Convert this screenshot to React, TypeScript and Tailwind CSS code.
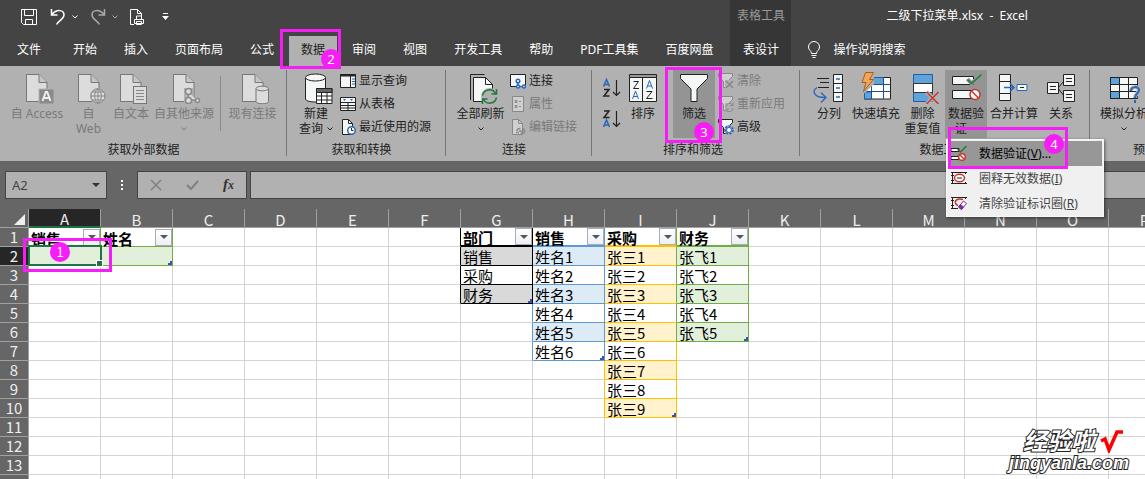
import type { ReactNode } from 'react';
import clsx from 'clsx';

const COLUMNS = 'ABCDEFGHIJKLMNOPQRSTUVWXYZ'.split('');
const ROWS = Array.from({ length: 40 }, (_, i) => i + 1);

type SheetTable = {
  items: string[];
  band: string;
  line: string;
  head: string;
};

const TABLES: Record<string, SheetTable> = {
  A: { items: ['销售', ''], band: 'bg-[#e2efda]', line: 'border-b-[#70ad47]', head: 'border-b-[#70ad47]' },
  B: { items: ['姓名', ''], band: 'bg-[#e2efda]', line: 'border-b-[#70ad47]', head: 'border-b-[#70ad47]' },
  G: {
    items: ['部门', '销售', '采购', '财务'],
    band: 'bg-[#d9d9d9]',
    line: 'border-b-black',
    head: 'border-b-2 border-b-black',
  },
  H: {
    items: ['销售', '姓名1', '姓名2', '姓名3', '姓名4', '姓名5', '姓名6'],
    band: 'bg-[#ddebf7]',
    line: 'border-b-[#5b9bd5]',
    head: 'border-b-2 border-b-[#5b9bd5]',
  },
  I: {
    items: ['采购', '张三1', '张三2', '张三3', '张三4', '张三5', '张三6', '张三7', '张三8', '张三9'],
    band: 'bg-[#fff2cc]',
    line: 'border-b-[#ffc000]',
    head: 'border-b-2 border-b-[#ffc000]',
  },
  J: {
    items: ['财务', '张飞1', '张飞2', '张飞3', '张飞4', '张飞5'],
    band: 'bg-[#e2efda]',
    line: 'border-b-[#70ad47]',
    head: 'border-b-2 border-b-[#70ad47]',
  },
};

// vertical lines between neighbouring tables
function rightEdge(col: string, row: number) {
  if ((col === 'A' || col === 'B') && row <= 2) return 'border-r-[#70ad47]';
  if (col === 'F' && row <= 4) return 'border-r-black';
  if (col === 'G' && row <= 4) return 'border-r-black';
  if (col === 'G' && row <= 7) return 'border-r-[#5b9bd5]';
  if (col === 'H' && row <= 7) return 'border-r-[#5b9bd5]';
  if (col === 'H' && row <= 10) return 'border-r-[#ffc000]';
  if (col === 'I' && row <= 6) return 'border-r-[#70ad47]';
  if (col === 'I' && row <= 10) return 'border-r-[#ffc000]';
  if (col === 'J' && row <= 6) return 'border-r-[#70ad47]';
  return 'border-r-[#d4d4d4]';
}

/* ---------- icons ---------- */

function Big({ children }: { children: ReactNode }) {
  return (
    <svg viewBox="0 0 34 32" className="h-8 w-[34px] shrink-0" fill="none" stroke="#222" strokeWidth="1">
      {children}
    </svg>
  );
}

function Small({ children }: { children: ReactNode }) {
  return (
    <svg viewBox="0 0 16 16" className="size-4 shrink-0" fill="none" stroke="#222" strokeWidth="1">
      {children}
    </svg>
  );
}

const Doc = () => (
  <g stroke="#777" fill="#dcdcdc">
    <path d="M6.500 2.500h12.500l8 8v19h-20.500z" />
    <path d="M19 2.500v8h8" fill="#c6c6c6" />
  </g>
);

const AccessIcon = () => (
  <Big>
    <Doc />
    <rect x="19" y="17" width="15" height="15" fill="#8a8a8a" stroke="#b1b1b1" />
    <path d="M22.500 29l3.300-9h1.400l3.300 9M23.800 26h5.400" stroke="#eee" strokeWidth="2" />
  </Big>
);
const WebIcon = () => (
  <Big>
    <Doc />
    <circle cx="26" cy="24" r="8" fill="#b1b1b1" stroke="none" />
    <circle cx="26" cy="24" r="7" fill="#dcdcdc" stroke="#888" />
    <ellipse cx="26" cy="24" rx="3.300" ry="7" stroke="#888" />
    <path d="M26 17v14M19 24h14M20.500 20h11M20.500 28h11" stroke="#888" />
  </Big>
);
const TextIcon = () => (
  <Big>
    <Doc />
    <rect x="19.500" y="14.500" width="13" height="17" fill="#dcdcdc" stroke="#777" />
    <path d="M22 18.500h8M22 21.500h8M22 24.500h8M22 27.500h8" stroke="#888" />
  </Big>
);
const OtherIcon = () => (
  <Big>
    <Doc />
    <path d="M17 16h9v10h8v6h-17z" fill="#b1b1b1" stroke="none" />
    <g stroke="#8a8a8a" strokeWidth="1.500" fill="#dcdcdc">
      <path d="M21.500 20v8h8" />
      <circle cx="21.500" cy="19.500" r="3" />
      <circle cx="21.500" cy="28.500" r="3" />
      <circle cx="30.500" cy="28.500" r="2" />
    </g>
  </Big>
);
const ExistingIcon = () => (
  <Big>
    <Doc />
    <path d="M20 16.500v13c0 3 12.500 3 12.500 0v-13" fill="#dcdcdc" stroke="#777" />
    <ellipse cx="26.250" cy="16.500" rx="6.250" ry="2.300" fill="#dcdcdc" stroke="#777" />
  </Big>
);
const NewQueryIcon = () => (
  <Big>
    <path d="M6.500 6v21c0 4 20 4 20 0v-21" fill="#f4f7f6" />
    <ellipse cx="16.500" cy="5.500" rx="10" ry="3.500" fill="#f4f7f6" />
    <path d="M17.500 16.500h15.500v15h-15.500z" fill="#fff" />
    <path d="M17.500 16.500h15.500v4h-15.500z" fill="#666" />
    <path d="M17.500 24h15.500M17.500 28h15.500M22.500 20v12M28 20v12" />
  </Big>
);
const RefreshIcon = () => (
  <Big>
    <path d="M6.500 28v-25.500h14" />
    <path d="M9.500 5.500h12l7 7v17h-19z" fill="#f4f7f6" />
    <path d="M21.500 5.500v7h7" />
    <circle cx="25.500" cy="24.500" r="8.500" fill="#b1b1b1" stroke="none" />
    <path
      d="M18.500 23.500a7 7 0 0 1 13-2M32.500 25.500a7 7 0 0 1-13 2M32.500 17v5h-5M18.500 32v-5h5"
      stroke="#1e7a3c"
      strokeWidth="1.500"
    />
  </Big>
);
const SortIcon = () => (
  <Big>
    <path d="M3.500 5.500h13v24h-13zM16.500 5.500h14v24h-14z" fill="#f4f7f6" />
    <path d="M3.500 2.500h27v3h-27z" fill="#999" />
    <path d="M7.500 9.500h5l-5 7h5.500M20.500 19.500h5.500l-5.500 7h6" />
    <path d="M6.500 27l3-8 3 8M7.500 24.500h4M20.500 16.500l3-8 3 8M21.500 14h4" stroke="#2b67b8" />
  </Big>
);
const FilterIcon = () => (
  <Big>
    <path d="M3.500 2.500h27v4l-10.500 10.500v12.500h-6v-12.500l-10.500-10.500z" fill="#f4f7f6" />
  </Big>
);
const ColumnsIcon = () => (
  <Big>
    <path d="M5 6.500h12M8 10.500h9M6 15.500h11" />
    <path d="M21.500 2.500h9v27h-9zM21.500 11.500h9M21.500 20.500h9" fill="#f4f7f6" />
    <path d="M24 7h4M24 16h4M24 25h4M5 15.500c-5 3-4 10 8 10M9 20.500l5 5-5 5" stroke="#2b67b8" strokeWidth="1.300" />
  </Big>
);
const FlashIcon = () => (
  <Big>
    <path d="M5.500 5.500h26v21.500h-26z" fill="#fff" />
    <path d="M12.500 5.500h12v7h-12zM5.500 20h7v7h-7z" fill="#5fa3d9" stroke="#1f5ea8" />
    <path d="M5.500 12.500h26M5.500 19.500h26M12.500 5.500v21.500M24.500 5.500v21.500" stroke="#1f4e8c" />
    <path d="M0 0h15v12l-9 9h-6z" fill="#b1b1b1" stroke="none" />
    <path d="M6.500.5h8l-4 7h4l-10 12 2.500-9h-4z" fill="#f2a65a" stroke="#a85f14" />
  </Big>
);
const DedupeIcon = () => (
  <Big>
    <path d="M7.500 2.500h19v27h-19z" fill="#5fa3d9" stroke="#1f5ea8" />
    <path d="M7.500 11.500h19v9h-19z" fill="#fff" stroke="#333" />
    <path d="M20.500 20l12 12M32.500 20l-12 12" stroke="#b1b1b1" strokeWidth="4" />
    <path d="M20.500 20l12 12M32.500 20l-12 12" stroke="#c8372d" strokeWidth="1.500" />
  </Big>
);
const ValidationIcon = () => (
  <Big>
    <path d="M3.500 4.500h21v8h-21zM3.500 18.500h21v8h-21z" fill="#f4f7f6" />
    <path d="M18.500 7l4 4.500 10-9" stroke="#949494" strokeWidth="4" />
    <path d="M18.500 7.500l4 4 10-9" stroke="#1e7a3c" strokeWidth="1.500" />
    <circle cx="26" cy="22.500" r="5" fill="#fff" stroke="#c8372d" strokeWidth="1.500" />
    <path d="M22.500 19l7 7" stroke="#c8372d" strokeWidth="1.500" />
  </Big>
);
const ConsolidateIcon = () => (
  <Big>
    <path d="M2.500 2.500h11v7h-11zM2.500 9.500h11v12h-11zM2.500 21.500h11v7h-11z" fill="#f4f7f6" />
    <path d="M7 15.500h10M13 11.500l4 4-4 4" stroke="#2b67b8" strokeWidth="1.500" />
    <path d="M20 12.500h10v6h-10z" fill="#f4f7f6" stroke="#2b67b8" />
    <path d="M23 15.500h4" />
  </Big>
);
const RelationIcon = () => (
  <Big>
    <path d="M14 16l6-7M14 16l6 8" />
    <path d="M3.500 10.500h11v11h-11zM19.500 2.500h11v11h-11zM19.500 18.500h11v11h-11z" fill="#f4f7f6" />
    <path d="M6 14.500h6M6 17.500h6M22 6.500h6M22 9.500h6M22 22.500h6M22 25.500h6" />
  </Big>
);
const WhatIfIcon = () => (
  <Big>
    <path d="M3.500 5.500h27v21h-27z" fill="#f4f7f6" />
    <path d="M3.500 5.500h9v7h-9zM3.500 19.500h9v7h-9z" fill="#5fa3d9" />
    <path d="M3.500 12.500h27M3.500 19.500h27M12.500 5.500v21M21.500 5.500v21" />
    <path d="M24 19c0-5 8-5 8-1 0 3-4 4-4 8M28 28v3" stroke="#b1b1b1" strokeWidth="4" />
    <path d="M24 19c0-5 8-5 8-1 0 3-4 4-4 8M28 28v3" stroke="#2b67b8" strokeWidth="2" />
  </Big>
);

const PaneIcon = () => (
  <Small>
    <path d="M.5 1.500h15v13h-15z" fill="#f4f7f6" />
    <path d="M.5 1.500h15v1.500h-15z" fill="#333" />
    <path d="M10.500 3v11" />
    <path d="M12 6h3M12 8.500h3M12 11h3" stroke="#2b67b8" />
  </Small>
);
const FromTableIcon = () => (
  <Small>
    <path d="M.5 1.500h15v13h-15z" fill="#f4f7f6" />
    <path d="M.5 6.500h15M.5 9.500h15M.5 12h15M8 6v8" />
    <path d="M3 3h3l-1.500 2zM10 3h3l-1.500 2z" fill="#2b67b8" stroke="none" />
  </Small>
);
const RecentIcon = () => (
  <Small>
    <path d="M2.500.5h6l4 4v11h-10z" fill="#f4f7f6" />
    <path d="M8.500.5v4h4" />
    <circle cx="11.500" cy="11.500" r="3.800" fill="#fff" stroke="#2b67b8" strokeWidth="1.500" />
    <path d="M11.500 9v2.500h2" />
  </Small>
);
const ConnectionIcon = () => (
  <Small>
    <path d="M.5 1.500h15v12h-15z" fill="#f4f7f6" />
    <g stroke="#2b67b8" strokeWidth="1.500" fill="#fff">
      <path d="M8 8v5.500h6" />
      <circle cx="8" cy="8" r="1.800" />
      <circle cx="8" cy="13.500" r="1.500" />
      <circle cx="14" cy="13.500" r="1.500" />
    </g>
  </Small>
);
const PropertyIcon = () => (
  <Small>
    <path d="M2.500.5h11v15h-11z" fill="#d0d0d0" stroke="#888" />
    <path d="M5 4.500h2v2h-2zM5 9.500h2v2h-2zM9 5.500h2M9 10.500h2" stroke="#888" />
  </Small>
);
const EditLinkIcon = () => (
  <Small>
    <path d="M2.500.5h6l4 4v11h-10z" fill="#d0d0d0" stroke="#888" />
    <path d="M8.500.5v4h4" stroke="#888" />
    <path
      d="M7 12a2.500 2.500 0 0 1 2.500-2.500h1M12 9.500a2.500 2.500 0 0 1 1.500 4.500h-3M9 12h4M6 13.500h3"
      stroke="#888"
      strokeWidth="1.500"
    />
  </Small>
);
const ClearIcon = () => (
  <Small>
    <path d="M.5.5h14v3l-5 5v6h-4v-6l-5-5z" fill="#d0d0d0" stroke="#888" />
    <path d="M7 7h9v9h-9z" fill="#b1b1b1" stroke="none" />
    <path d="M8 8l7 7M15 8l-7 7" stroke="#888" strokeWidth="1.500" />
  </Small>
);
const ReapplyIcon = () => (
  <Small>
    <path d="M.5.5h14v3l-5 5v6h-4v-6l-5-5z" fill="#d0d0d0" stroke="#888" />
    <path d="M7 7h9v9h-9z" fill="#b1b1b1" stroke="none" />
    <path d="M8 11a3.500 3.500 0 0 1 6.500-2M15 12a3.500 3.500 0 0 1-6.500 2M15 6.500v3h-3M8 16v-3h3" stroke="#888" />
  </Small>
);
const AdvancedIcon = () => (
  <Small>
    <path d="M.5.500h14v3l-5 5v6h-4v-6l-5-5z" fill="#f4f7f6" />
    <circle cx="11" cy="11" r="5" fill="#b1b1b1" stroke="none" />
    <circle cx="11" cy="11" r="3.800" stroke="#2b67b8" strokeWidth="2" strokeDasharray="2 1.400" />
    <circle cx="11" cy="11" r="2.500" fill="#fff" stroke="#2b67b8" />
  </Small>
);
const MenuValidationIcon = () => (
  <Small>
    <path d="M0 3.500h8v3h-8zM0 11.500h8v3h-8z" fill="#fff" />
    <path d="M6.500 4l3 3 6-6" stroke="#1e7a3c" strokeWidth="1.300" />
    <circle cx="11" cy="12" r="3.300" fill="#fff" stroke="#c8372d" strokeWidth="1.500" />
    <path d="M9 10l4 4" stroke="#c8372d" strokeWidth="1.500" />
  </Small>
);
const CircleInvalidIcon = () => (
  <Small>
    <path d="M0 2.500h16M0 13.500h16M1.500 2v12M14.500 2v2M14.500 12v2M0 5.500h3M0 10.500h3" />
    <ellipse cx="8.500" cy="8" rx="5" ry="3.800" fill="#fff" stroke="#c8372d" strokeWidth="1.500" />
    <path d="M6 8h5" />
  </Small>
);
const ClearCircleIcon = () => (
  <Small>
    <path d="M0 2.500h16M0 13.500h7M1.500 2v12M14.500 2v2M0 5.500h3M0 10.500h3" />
    <path d="M12 4.500c-8-2-10 4-5 6" stroke="#c8372d" strokeWidth="1.500" />
    <path d="M7.500 12l5-6 3 2.500-5 6z" fill="#fff" stroke="#7a2f9a" />
    <path d="M7.500 12l2-2.500 3 2.500-2 2.500z" fill="#7a2f9a" stroke="#7a2f9a" />
  </Small>
);

function Chevron() {
  return (
    <svg viewBox="0 0 6 4" className="h-1 w-1.5 shrink-0" fill="none" stroke="currentColor">
      <path d="M.5.5l2.500 2.500 2.500-2.500" />
    </svg>
  );
}

/* ---------- pieces ---------- */

// numbered step frame laid over a control
function Step({ n, className, badge }: { n: number; className: string; badge: string }) {
  return (
    <span className={clsx('pointer-events-none absolute z-30 border-3 border-[#f71df7]', className)}>
      <span
        className={clsx(
          'absolute flex size-5 items-center justify-center rounded-full bg-[#f71df7] text-[13px] leading-5 font-normal text-white',
          badge
        )}
      >
        {n}
      </span>
    </span>
  );
}

type BigButtonProps = {
  icon: ReactNode;
  lines: string[];
  width: string;
  arrow?: boolean;
  disabled?: boolean;
  active?: boolean;
};

function BigButton({ icon, lines, width, arrow, disabled, active }: BigButtonProps) {
  return (
    <button
      disabled={disabled}
      className={clsx(
        'flex h-[68px] shrink-0 flex-col items-center pt-0.5',
        width,
        disabled ? 'text-[#7a7a7a]' : 'text-[#222]',
        active && 'bg-[#949494]'
      )}
    >
      {icon}
      <span className="mt-0.5 block whitespace-nowrap">{lines[0]}</span>
      {(lines[1] || arrow) && (
        <span className="flex h-[15px] items-center gap-1 whitespace-nowrap">
          {lines[1]}
          {arrow && <Chevron />}
        </span>
      )}
    </button>
  );
}

function SmallButton({ icon, text, disabled }: { icon: ReactNode; text: string; disabled?: boolean }) {
  return (
    <button
      disabled={disabled}
      className={clsx(
        'flex h-[23px] items-center gap-[3px] pb-0.5 whitespace-nowrap',
        disabled ? 'text-[#7a7a7a]' : 'text-[#222]'
      )}
    >
      {icon}
      {text}
    </button>
  );
}

function Group({ title, className, children }: { title: string; className?: string; children: ReactNode }) {
  return (
    <>
      <section className={clsx('flex shrink-0 flex-col justify-between pt-1 pb-1', className)}>
        <div className="flex">{children}</div>
        <h2 className="text-center text-[#222]">{title}</h2>
      </section>
      <div className="mt-1 h-[86px] w-px shrink-0 bg-[#767676]" />
    </>
  );
}

function Tab({ text, className }: { text: string; className?: string }) {
  return <button className={clsx('h-full px-3 pb-[3px] whitespace-nowrap', className)}>{text}</button>;
}

function TitleBar() {
  return (
    <header className="flex h-[66px] bg-[#444] text-white">
      <div className="shrink-0 pr-[5px]">
        <div className="flex h-9 items-center pb-0.5 pl-5">
          <button aria-label="保存">
            <svg viewBox="0 0 18 18" className="size-[18px]" fill="none" stroke="white">
              <path d="M1.500 1.500h15v15h-13l-2-2zM4.500 1.500v6h9v-6M5.500 16.500v-5h7v5" />
            </svg>
          </button>
          <button aria-label="撤消" className="ml-3 flex items-center gap-1.5">
            <svg viewBox="0 0 16 18" className="h-[18px] w-4" fill="none" stroke="white" strokeWidth="1.500">
              <path d="M1.500 1v6h6M2 6.500c5-6 12-4.500 12 .5 0 4-5 5-7.500 9.500" />
            </svg>
            <Chevron />
          </button>
          <button aria-label="恢复" className="ml-3 flex items-center gap-1.5 text-[#aaa]">
            <svg viewBox="0 0 16 18" className="h-[18px] w-4" fill="none" stroke="#aaa" strokeWidth="1.500">
              <path d="M14.500 1v6h-6M14 6.500c-5-6-12-4.500-12 .5 0 4 5 5 7.500 9.500" />
            </svg>
            <Chevron />
          </button>
          <button aria-label="打印预览" className="ml-3">
            <svg viewBox="0 0 16 18" className="h-[18px] w-4" fill="none" stroke="white">
              <path d="M4 16.500h-3.500v-15h7l4 4v3M7.500 1.500v4h4M6.500 11v-3h5v3M4.500 11.500h9v4h-9zM6.500 13.500h5v3h-5z" />
            </svg>
          </button>
          <button aria-label="自定义快速访问工具栏" className="ml-4">
            <svg viewBox="0 0 7 8" className="h-2 w-[7px]">
              <path d="M1 0h5v1h-5zM0 3h7l-3.500 4z" fill="white" />
            </svg>
          </button>
        </div>
        <nav className="flex h-[30px] gap-[3px] pl-[5px]">
          <Tab text="文件" className="mr-[5px]" />
          <Tab text="开始" />
          <Tab text="插入" />
          <Tab text="页面布局" />
          <Tab text="公式" />
          <div className="relative">
            <Tab text="数据" className="bg-[#b1b1b1] text-[#222]" />
            <Step n={2} className="-top-[7px] -left-[9px] h-10 w-[61px]" badge="top-[17px] left-[38px]" />
          </div>
          <Tab text="审阅" />
          <Tab text="视图" />
          <Tab text="开发工具" />
          <Tab text="帮助" />
          <Tab text="PDF工具集" />
          <Tab text="百度网盘" />
        </nav>
      </div>
      <div className="w-[61px] shrink-0 bg-[#363636] text-center">
        <div className="flex h-9 items-center justify-center pb-1.5 text-[#999]">表格工具</div>
        <div className="h-[30px]">
          <Tab text="表设计" />
        </div>
      </div>
      <div className="flex-1">
        <div className="flex h-9 items-center pb-1.5 pl-[95px] whitespace-pre">{'二级下拉菜单.xlsx  -  Excel'}</div>
        <label className="flex h-[30px] items-center gap-3 pb-[3px] pl-4">
          <svg viewBox="0 0 14 18" className="h-[18px] w-3.5" fill="none" stroke="white">
            <path d="M4.500 12.500c0-3-3-3-3-6.500a5.500 5.500 0 0 1 11 0c0 3.500-3 3.500-3 6.500zM4.500 14.500h5M5.500 16.500h3" />
          </svg>
          <input
            aria-label="操作说明搜索"
            placeholder="操作说明搜索"
            className="w-40 bg-transparent outline-none placeholder:text-white"
          />
        </label>
      </div>
    </header>
  );
}

function ValidationMenu() {
  const items = [
    { icon: <MenuValidationIcon />, text: '数据验证', hotkey: 'V', tail: '...' },
    { icon: <CircleInvalidIcon />, text: '圈释无效数据', hotkey: 'I', tail: '' },
    { icon: <ClearCircleIcon />, text: '清除验证标识圈', hotkey: 'R', tail: '' },
  ];
  return (
    <div className="absolute top-[69px] left-px z-20 w-[158px] border border-[#f8f8f8] bg-[#f0f0f0] p-px pb-0 shadow-[1px_1px_3px_rgba(0,0,0,0.5)]">
      {items.map((item, i) => (
        <button
          key={item.hotkey}
          className={clsx(
            'relative flex h-[25px] w-full items-center gap-3 pb-px pl-[3px] whitespace-nowrap',
            i === 0 ? 'bg-[#979797] text-black' : 'text-[#444]'
          )}
        >
          {item.icon}
          <span>
            {item.text}(<u>{item.hotkey}</u>){item.tail}
          </span>
          {i === 0 && <Step n={4} className="-top-3.5 left-0 h-[42px] w-[120px]" badge="top-1 left-[93px]" />}
        </button>
      ))}
    </div>
  );
}

function SortArrow({ desc }: { desc?: boolean }) {
  return (
    <button aria-label={desc ? '降序' : '升序'} className="h-[31px]">
      <svg viewBox="0 0 20 20" className="h-5 w-5" fill="none" strokeWidth="1.500">
        <path
          d="M2.500 8.500l3-7 3 7M3.500 6.500h4"
          stroke="#2b67b8"
          transform={desc ? 'translate(0 9.500)' : undefined}
        />
        <path d="M3 11.500h5l-5 6.500h5.500" stroke="#222" transform={desc ? 'translate(0 -9.500)' : undefined} />
        <path d="M15.500 2v15.500M12 14l3.500 3.500 3.500-3.500" stroke="#222" strokeWidth="1.200" />
      </svg>
    </button>
  );
}

function Ribbon() {
  return (
    <div className="flex h-[95px] bg-[#b1b1b1]">
      <Group title="获取外部数据" className="pr-1.5 pl-[7px]">
        <BigButton icon={<AccessIcon />} lines={['自 Access']} width="w-[60px]" disabled />
        <BigButton icon={<WebIcon />} lines={['自', 'Web']} width="w-[43px]" disabled />
        <BigButton icon={<TextIcon />} lines={['自文本']} width="w-[42px]" disabled />
        <BigButton icon={<OtherIcon />} lines={['自其他来源']} width="w-16" arrow disabled />
        <div className="mx-1 mt-1.5 h-[55px] w-px bg-[#8a8a8a]" />
        <BigButton icon={<ExistingIcon />} lines={['现有连接']} width="w-[55px]" disabled />
      </Group>
      <Group title="获取和转换" className="pr-3.5 pl-[5px]">
        <BigButton icon={<NewQueryIcon />} lines={['新建', '查询']} width="w-12" arrow />
        <div>
          <SmallButton icon={<PaneIcon />} text="显示查询" />
          <SmallButton icon={<FromTableIcon />} text="从表格" />
          <SmallButton icon={<RecentIcon />} text="最近使用的源" />
        </div>
      </Group>
      <Group title="连接" className="pr-3.5 pl-[5px]">
        <BigButton icon={<RefreshIcon />} lines={['全部刷新']} width="w-[59px]" arrow />
        <div>
          <SmallButton icon={<ConnectionIcon />} text="连接" />
          <SmallButton icon={<PropertyIcon />} text="属性" disabled />
          <SmallButton icon={<EditLinkIcon />} text="编辑链接" disabled />
        </div>
      </Group>
      <Group title="排序和筛选" className="pr-3.5 pl-[9px]">
        <div className="flex flex-col pt-0.5">
          <SortArrow />
          <SortArrow desc />
        </div>
        <BigButton icon={<SortIcon />} lines={['排序']} width="w-11" />
        <div className="relative mr-[3px] ml-2">
          <BigButton icon={<FilterIcon />} lines={['筛选']} width="w-[42px]" active />
          <Step n={3} className="-top-[3px] -left-2 h-[76px] w-[57px]" badge="top-[52px] left-[26px]" />
        </div>
        <div>
          <SmallButton icon={<ClearIcon />} text="清除" disabled />
          <SmallButton icon={<ReapplyIcon />} text="重新应用" disabled />
          <SmallButton icon={<AdvancedIcon />} text="高级" />
        </div>
      </Group>
      <Group title="数据工具" className="pr-2 pl-1.5">
        <BigButton icon={<ColumnsIcon />} lines={['分列']} width="w-[46px]" />
        <BigButton icon={<FlashIcon />} lines={['快速填充']} width="w-12" />
        <BigButton icon={<DedupeIcon />} lines={['删除', '重复值']} width="w-[45px]" />
        <div className="relative">
          <BigButton icon={<ValidationIcon />} lines={['数据验', '证']} width="w-[42px]" arrow active />
          <ValidationMenu />
        </div>
        <BigButton icon={<ConsolidateIcon />} lines={['合并计算']} width="w-[54px]" />
        <BigButton icon={<RelationIcon />} lines={['关系']} width="w-10" />
      </Group>
      <Group title="预测" className="min-w-[110px] px-1.5">
        <BigButton icon={<WhatIfIcon />} lines={['模拟分析']} width="w-14" arrow />
      </Group>
    </div>
  );
}

function FormulaBar() {
  return (
    <div className="flex h-12 bg-[#666] pt-2.5 pb-2.5 pl-[5px]">
      <div className="flex w-[102px] shrink-0 items-center border border-[#444] bg-[#b1b1b1] pr-1.5">
        <input
          aria-label="名称框"
          defaultValue="A2"
          className="w-full min-w-0 pl-1.5 text-[13px] text-[#444] outline-none"
        />
        <button aria-label="名称列表">
          <svg viewBox="0 0 8 4" className="h-1 w-2">
            <path d="M0 0h8l-4 4z" fill="#333" />
          </svg>
        </button>
      </div>
      <div className="flex w-[30px] shrink-0 flex-col items-center justify-center gap-0.5">
        <span className="size-0.5 bg-white" />
        <span className="size-0.5 bg-white" />
        <span className="size-0.5 bg-white" />
      </div>
      <div className="flex w-[110px] shrink-0 items-center justify-between border border-[#444] bg-[#b1b1b1] px-3">
        <button aria-label="取消">
          <svg viewBox="0 0 12 12" className="size-3" fill="none" stroke="#808080" strokeWidth="1.500">
            <path d="M1 1l10 10M11 1l-10 10" />
          </svg>
        </button>
        <button aria-label="输入">
          <svg viewBox="0 0 13 12" className="h-3 w-[13px]" fill="none" stroke="#808080" strokeWidth="2">
            <path d="M1 6l4 4 7-8" />
          </svg>
        </button>
        <button className="font-['Liberation_Serif'] text-[15px] font-bold text-[#333] italic">
          f<span className="text-[12px]">x</span>
        </button>
      </div>
      <input
        aria-label="编辑栏"
        className="ml-[3px] min-w-0 flex-1 border border-r-0 border-[#444] bg-[#b1b1b1] px-2 outline-none"
      />
    </div>
  );
}

function Cell({ col, row }: { col: string; row: number }) {
  const table = TABLES[col];
  const inTable = table !== undefined && row <= table.items.length;
  const isHead = inTable && row === 1;
  const isLast = inTable && row === table.items.length;
  return (
    <td
      className={clsx(
        'h-[19px] border-r border-b p-0',
        rightEdge(col, row),
        isHead && table.head,
        inTable && !isHead && table.line,
        !inTable && 'border-b-[#d4d4d4]',
        inTable && row % 2 === 0 && table.band
      )}
    >
      {inTable && (
        <div
          className={clsx(
            'relative pl-0.5 leading-5 whitespace-nowrap text-black',
            isHead ? 'h-[17px] font-bold' : 'h-[18px]'
          )}
        >
          {table.items[row - 1]}
          {isHead && (
            <button
              aria-label="筛选"
              className="absolute top-0 right-0 flex size-[17px] items-center justify-center border border-[#a9adb5] bg-linear-to-b from-white to-[#eceff4]"
            >
              <svg viewBox="0 0 8 4" className="h-1 w-2">
                <path d="M0 0h8l-4 4z" fill="#555" />
              </svg>
            </button>
          )}
          {isLast && col !== 'A' && (
            <svg viewBox="0 0 4 4" className="absolute right-0 bottom-0 size-1">
              <path d="M2 0h2v4h-4v-2h2z" fill="#3f51b5" />
            </svg>
          )}
          {col === 'A' && row === 2 && (
            <>
              <span className="absolute -top-0.5 -left-px z-10 h-[21px] w-[74px] border-2 border-[#217346]">
                <span className="absolute -right-0.5 -bottom-0.5 size-[5px] bg-[#217346] outline outline-white" />
              </span>
              <Step n={1} className="-top-[9px] -left-1.5 h-[34px] w-[89px]" badge="top-px left-6" />
            </>
          )}
        </div>
      )}
    </td>
  );
}

function Sheet() {
  return (
    <div className="min-h-0 flex-1 overflow-hidden bg-white">
      <table className="w-max table-fixed border-separate border-spacing-0 font-['Noto_Sans_CJK_SC',sans-serif] text-[15px]">
        <thead>
          <tr>
            <th className="h-[19px] w-[29px] min-w-[29px] border-r border-b border-[#a0a0a0] bg-[#666] p-0">
              <svg viewBox="0 0 11 11" className="mt-0.5 ml-3.5 size-[11px]">
                <path d="M11 0v11h-11z" fill="#eee" />
              </svg>
            </th>
            {COLUMNS.map((col) => (
              <th
                key={col}
                scope="col"
                className={clsx(
                  'h-[19px] w-[72px] min-w-[72px] border-r p-0 pt-0.5 leading-[15px] font-normal text-[#eee]',
                  col === 'A'
                    ? 'border-b-2 border-r-[#a0a0a0] border-b-[#217346] bg-[#262626]'
                    : 'border-b border-[#a0a0a0] bg-[#666]'
                )}
              >
                {col}
              </th>
            ))}
          </tr>
        </thead>
        <tbody>
          {ROWS.map((row) => (
            <tr key={row}>
              <th
                scope="row"
                className={clsx(
                  'h-[19px] border-r border-b border-[#a0a0a0] p-0 leading-[18px] font-normal text-[#eee]',
                  row === 2 ? 'bg-[#262626]' : 'bg-[#666]'
                )}
              >
                {row}
              </th>
              {COLUMNS.map((col) => (
                <Cell key={col} col={col} row={row} />
              ))}
            </tr>
          ))}
        </tbody>
      </table>
    </div>
  );
}

function Watermark() {
  return (
    <div className="absolute right-4 bottom-1.5 z-40 flex flex-col items-end font-bold text-white italic">
      <div className="flex items-center gap-1 pr-1">
        <span className="text-[24px] leading-6 [-webkit-text-stroke:2px_#222] [paint-order:stroke_fill]">经验啦</span>
        <svg viewBox="0 0 26 24" className="h-6 w-[26px]" fill="none" stroke="red" strokeWidth="3.500">
          <path d="M2 12l4-2 4 11 8-18h6" />
        </svg>
      </div>
      <span className="font-['Liberation_Sans'] text-[18px] leading-5 [-webkit-text-stroke:2px_#222] [paint-order:stroke_fill]">
        jingyanla.com
      </span>
    </div>
  );
}

export default function App() {
  return (
    <div className="relative flex h-screen flex-col overflow-hidden bg-[#666] font-['Noto_Sans','Noto_Sans_CJK_SC',sans-serif] text-[12px] leading-[15px]">
      <TitleBar />
      <Ribbon />
      <FormulaBar />
      <Sheet />
      <Watermark />
    </div>
  );
}
